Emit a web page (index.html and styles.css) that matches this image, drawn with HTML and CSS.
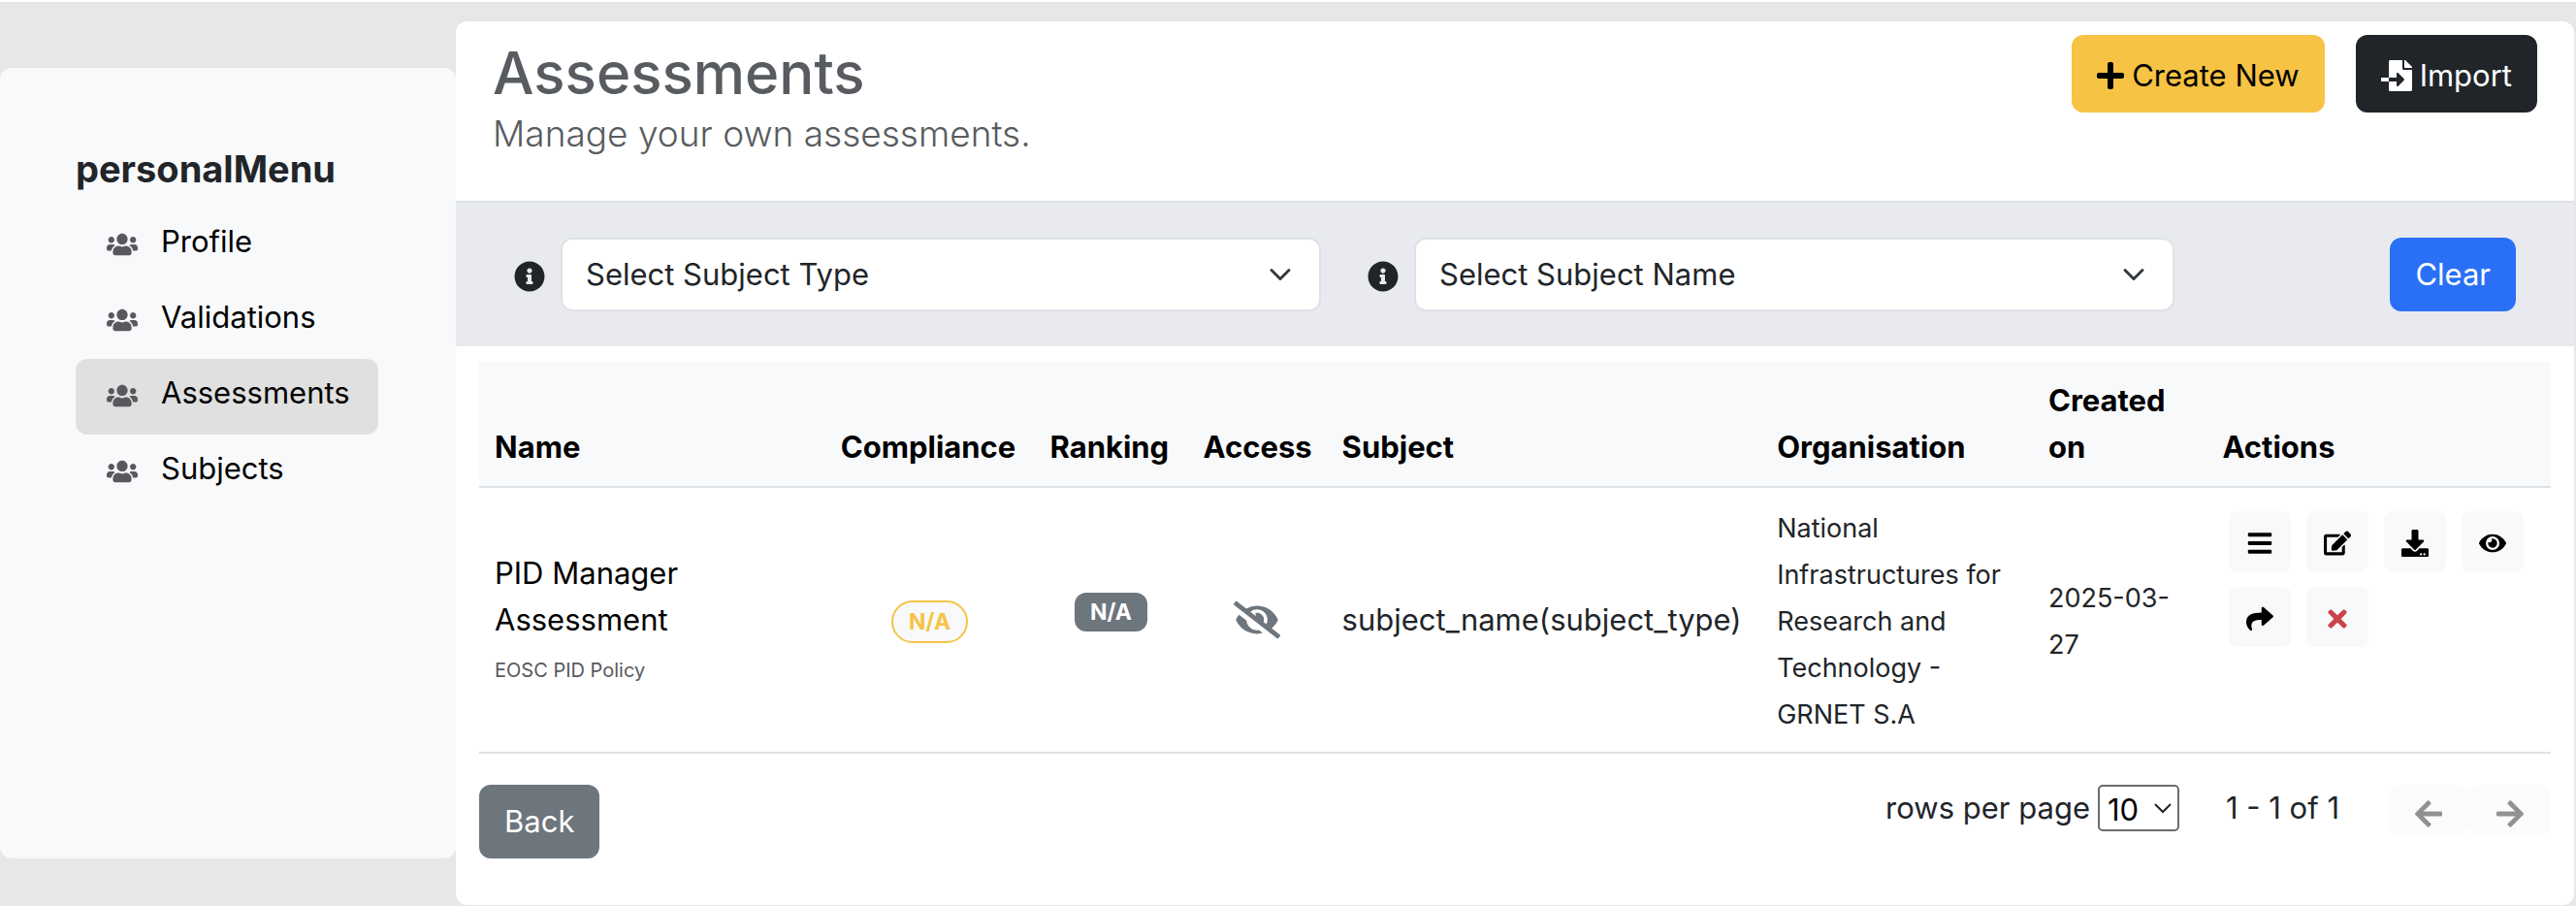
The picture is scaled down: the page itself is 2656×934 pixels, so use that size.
FILE: index.html
```html
<!DOCTYPE html>
<html lang="en">
<head>
<meta charset="utf-8">
<title>Assessments</title>
<link rel="stylesheet" href="styles.css">
</head>
<body>
<svg class="sprite" aria-hidden="true">
  <symbol id="users" viewBox="0 0 640 512"><path d="M96 224c35.3 0 64-28.7 64-64s-28.7-64-64-64-64 28.7-64 64 28.7 64 64 64zm448 0c35.3 0 64-28.7 64-64s-28.7-64-64-64-64 28.7-64 64 28.7 64 64 64zm32 32h-64c-17.6 0-33.5 7.1-45.1 18.6 40.3 22.1 68.9 62 75.1 109.4h66c17.7 0 32-14.3 32-32v-32c0-35.3-28.7-64-64-64zm-256 0c61.9 0 112-50.1 112-112S381.9 32 320 32 208 82.1 208 144s50.1 112 112 112zm76.8 32h-8.3c-20.8 10-43.9 16-68.5 16s-47.6-6-68.5-16h-8.3C179.6 288 128 339.6 128 403.2V432c0 26.5 21.5 48 48 48h288c26.5 0 48-21.5 48-48v-28.8c0-63.6-51.6-115.2-115.2-115.2zm-223.7-13.4C161.5 263.1 145.6 256 128 256H64c-35.3 0-64 28.7-64 64v32c0 17.7 14.3 32 32 32h65.9c6.3-47.4 34.9-87.3 75.2-109.4z"/></symbol>
  <symbol id="plus" viewBox="0 0 448 512"><path d="M416 208H272V64c0-17.67-14.33-32-32-32h-32c-17.67 0-32 14.33-32 32v144H32c-17.67 0-32 14.33-32 32v32c0 17.67 14.33 32 32 32h144v144c0 17.67 14.33 32 32 32h32c17.67 0 32-14.33 32-32V304h144c17.67 0 32-14.33 32-32v-32c0-17.67-14.33-32-32-32z"/></symbol>
  <symbol id="file-import" viewBox="0 0 512 512"><path d="M16 288c-8.8 0-16 7.2-16 16v32c0 8.8 7.2 16 16 16h112v-64zm489-183L407.1 7c-4.5-4.5-10.6-7-17-7H384v128h128v-6.1c0-6.3-2.5-12.4-7-16.9zm-153 31V0H152c-13.3 0-24 10.7-24 24v264h128v-65.2c0-14.3 17.3-21.4 27.4-11.3L379 308c6.6 6.7 6.6 17.4 0 24l-95.7 96.4c-10.1 10.1-27.4 3-27.4-11.3V352H128v136c0 13.3 10.7 24 24 24h336c13.3 0 24-10.7 24-24V160H376c-13.2 0-24-10.8-24-24z"/></symbol>
  <symbol id="info" viewBox="0 0 512 512"><path d="M256 8C119.043 8 8 119.083 8 256c0 136.997 111.043 248 248 248s248-111.003 248-248C504 119.083 392.957 8 256 8zm0 110c23.196 0 42 18.804 42 42s-18.804 42-42 42-42-18.804-42-42 18.804-42 42-42zm56 254c0 6.627-5.373 12-12 12h-88c-6.627 0-12-5.373-12-12v-24c0-6.627 5.373-12 12-12h12v-64h-12c-6.627 0-12-5.373-12-12v-24c0-6.627 5.373-12 12-12h64c6.627 0 12 5.373 12 12v100h12c6.627 0 12 5.373 12 12v24z"/></symbol>
  <symbol id="chevron" viewBox="0 0 16 16"><path fill="none" stroke="currentColor" stroke-width="2" stroke-linecap="round" stroke-linejoin="round" d="m2 5 6 6 6-6"/></symbol>
  <symbol id="chevron-thin" viewBox="0 0 20 20"><path fill="none" stroke="currentColor" stroke-width="2" d="m2 6 8 8 8-8"/></symbol>
  <symbol id="bars" viewBox="0 0 448 512"><path d="M16 132h416c8.837 0 16-7.163 16-16V76c0-8.837-7.163-16-16-16H16C7.163 60 0 67.163 0 76v40c0 8.837 7.163 16 16 16zm0 160h416c8.837 0 16-7.163 16-16v-40c0-8.837-7.163-16-16-16H16c-8.837 0-16 7.163-16 16v40c0 8.837 7.163 16 16 16zm0 160h416c8.837 0 16-7.163 16-16v-40c0-8.837-7.163-16-16-16H16c-8.837 0-16 7.163-16 16v40c0 8.837 7.163 16 16 16z"/></symbol>
  <symbol id="edit" viewBox="0 0 576 512"><path d="M402.6 83.2l90.2 90.2c3.8 3.8 3.8 10 0 13.8L274.4 405.6l-92.8 10.3c-12.4 1.4-22.9-9.1-21.5-21.5l10.3-92.8L388.8 83.2c3.8-3.8 10-3.8 13.8 0zm162-22.9l-48.8-48.8c-15.2-15.2-39.9-15.2-55.2 0l-35.4 35.4c-3.8 3.8-3.8 10 0 13.8l90.2 90.2c3.8 3.8 10 3.8 13.8 0l35.4-35.4c15.2-15.3 15.2-40 0-55.2zM384 346.2V448H64V128h229.8c3.2 0 6.2-1.3 8.5-3.5l40-40c7.6-7.6 2.2-20.5-8.5-20.5H48C21.5 64 0 85.5 0 112v352c0 26.5 21.5 48 48 48h352c26.5 0 48-21.5 48-48V306.2c0-10.7-12.9-16-20.5-8.5l-40 40c-2.2 2.3-3.5 5.3-3.5 8.5z"/></symbol>
  <symbol id="download" viewBox="0 0 512 512"><path d="M216 0h80c13.3 0 24 10.7 24 24v168h87.7c17.8 0 26.7 21.5 14.1 34.1L269.7 378.3c-7.5 7.5-19.8 7.5-27.3 0L90.1 226.1c-12.6-12.6-3.7-34.1 14.1-34.1H192V24c0-13.3 10.7-24 24-24zm296 376v112c0 13.3-10.7 24-24 24H24c-13.3 0-24-10.7-24-24V376c0-13.3 10.7-24 24-24h146.7l49 49c20.1 20.1 52.5 20.1 72.6 0l49-49H488c13.3 0 24 10.7 24 24zm-124 88c0-11-9-20-20-20s-20 9-20 20 9 20 20 20 20-9 20-20zm64 0c0-11-9-20-20-20s-20 9-20 20 9 20 20 20 20-9 20-20z"/></symbol>
  <symbol id="eye" viewBox="0 0 576 512"><path d="M572.52 241.4C518.29 135.59 410.93 64 288 64S57.68 135.64 3.48 241.41a32.35 32.35 0 0 0 0 29.19C57.71 376.41 165.07 448 288 448s230.32-71.64 284.52-177.41a32.35 32.35 0 0 0 0-29.19zM288 400a144 144 0 1 1 144-144 143.93 143.93 0 0 1-144 144zm0-240a95.31 95.31 0 0 0-25.31 3.79 47.85 47.85 0 0 1-66.9 66.9A95.78 95.78 0 1 0 288 160z"/></symbol>
  <symbol id="eye-slash" viewBox="0 0 640 512"><path d="M320 400c-75.85 0-137.25-58.71-142.9-133.11L72.2 185.82c-13.79 17.3-26.48 35.59-36.72 55.59a32.35 32.35 0 0 0 0 29.19C89.71 376.41 197.07 448 320 448c26.91 0 52.87-4 77.89-10.46L346 397.39a144.13 144.13 0 0 1-26 2.61zm313.82 58.1l-110.55-85.44a331.25 331.25 0 0 0 81.25-102.07 32.35 32.35 0 0 0 0-29.19C550.29 135.59 442.93 64 320 64a308.15 308.15 0 0 0-147.32 37.7L45.46 3.37A16 16 0 0 0 23 6.18L3.37 31.45A16 16 0 0 0 6.18 53.9l588.36 454.73a16 16 0 0 0 22.46-2.81l19.64-25.27a16 16 0 0 0-2.82-22.45zm-183.72-142l-39.3-30.38A94.75 94.75 0 0 0 416 256a94.76 94.76 0 0 0-121.31-92.21A47.65 47.65 0 0 1 304 192a46.64 46.64 0 0 1-1.54 10l-73.61-56.89A142.31 142.31 0 0 1 320 112a143.92 143.92 0 0 1 144 144c0 21.63-5.29 41.79-13.9 60.11z"/></symbol>
  <symbol id="share" viewBox="0 0 512 512"><path d="M503.691 189.836L327.687 37.851C312.281 24.546 288 35.347 288 56.015v80.053C127.371 137.907 0 170.1 0 322.326c0 61.441 39.581 122.309 83.333 154.132 13.653 9.931 33.111-2.533 28.077-18.631C66.066 312.814 132.917 274.316 288 272.085V360c0 20.7 24.3 31.453 39.687 18.164l176.004-152c11.071-9.562 11.086-26.753 0-36.328z"/></symbol>
  <symbol id="times" viewBox="0 0 352 512"><path d="M242.72 256l100.07-100.07c12.28-12.28 12.28-32.19 0-44.48l-22.24-22.24c-12.28-12.28-32.19-12.28-44.48 0L176 189.28 75.93 89.21c-12.28-12.28-32.19-12.28-44.48 0L9.21 111.45c-12.28 12.28-12.28 32.19 0 44.48L109.28 256 9.21 356.07c-12.28 12.28-12.28 32.19 0 44.48l22.24 22.24c12.28 12.28 32.2 12.28 44.48 0L176 322.72l100.07 100.07c12.28 12.28 32.2 12.28 44.48 0l22.24-22.24c12.28-12.28 12.28-32.19 0-44.48L242.72 256z"/></symbol>
  <symbol id="arrow-left" viewBox="0 0 448 512"><path d="M257.5 445.1l-22.2 22.2c-9.4 9.4-24.6 9.4-33.9 0L7 273c-9.4-9.4-9.4-24.6 0-33.9L201.4 44.7c9.4-9.4 24.6-9.4 33.9 0l22.2 22.2c9.5 9.5 9.3 25-.4 34.3L136.6 216H424c13.3 0 24 10.7 24 24v32c0 13.3-10.7 24-24 24H136.6l120.5 114.8c9.8 9.3 10 24.8.4 34.3z"/></symbol>
  <symbol id="arrow-right" viewBox="0 0 448 512"><path d="M190.5 66.9l22.2-22.2c9.4-9.4 24.6-9.4 33.9 0L441 239c9.4 9.4 9.4 24.6 0 33.9L246.6 467.3c-9.4 9.4-24.6 9.4-33.9 0l-22.2-22.2c-9.5-9.5-9.3-25 .4-34.3L311.4 296H24c-13.3 0-24-10.7-24-24v-32c0-13.3 10.7-24 24-24h287.4L190.9 101.2c-9.8-9.3-10-24.8-.4-34.3z"/></symbol>
</svg>

<div class="page">
  <nav class="sidebar" aria-labelledby="menu-title">
    <h2 class="sidebar-title" id="menu-title">personalMenu</h2>
    <ul class="menu">
      <li><a class="menu-link" href="#profile"><svg class="icon menu-icon"><use href="#users"/></svg>Profile</a></li>
      <li><a class="menu-link" href="#validations"><svg class="icon menu-icon"><use href="#users"/></svg>Validations</a></li>
      <li><a class="menu-link active" href="#assessments" aria-current="page"><svg class="icon menu-icon"><use href="#users"/></svg>Assessments</a></li>
      <li><a class="menu-link" href="#subjects"><svg class="icon menu-icon"><use href="#users"/></svg>Subjects</a></li>
    </ul>
  </nav>

  <main class="main">
    <header class="header">
      <div>
        <h1 class="title">Assessments</h1>
        <p class="subtitle">Manage your own assessments.</p>
      </div>
      <div class="header-actions">
        <button class="btn btn-tall btn-warning" type="button"><svg class="icon icon-plus"><use href="#plus"/></svg>Create New</button>
        <button class="btn btn-tall btn-dark" type="button"><svg class="icon icon-32"><use href="#file-import"/></svg>Import</button>
      </div>
    </header>

    <form class="filters">
      <div class="filter">
        <svg class="icon icon-32 info-icon"><use href="#info"/></svg>
        <div class="select-wrap">
          <select class="select" aria-label="Subject type"><option>Select Subject Type</option></select>
          <svg class="icon select-arrow"><use href="#chevron"/></svg>
        </div>
      </div>
      <div class="filter">
        <svg class="icon icon-32 info-icon"><use href="#info"/></svg>
        <div class="select-wrap">
          <select class="select" aria-label="Subject name"><option>Select Subject Name</option></select>
          <svg class="icon select-arrow"><use href="#chevron"/></svg>
        </div>
      </div>
      <button class="btn btn-primary" type="reset">Clear</button>
    </form>

    <div class="content">
      <table class="table">
        <colgroup>
          <col class="col-name"><col class="col-compliance"><col class="col-ranking"><col class="col-access"><col class="col-subject"><col class="col-org"><col class="col-created"><col class="col-actions">
        </colgroup>
        <thead>
          <tr><th>Name</th><th>Compliance</th><th>Ranking</th><th>Access</th><th>Subject</th><th>Organisation</th><th>Created on</th><th>Actions</th></tr>
        </thead>
        <tbody>
          <tr>
            <td><div class="name">PID Manager Assessment</div><div><span class="policy">EOSC PID Policy</span></div></td>
            <td class="center"><span class="badge badge-outline">N/A</span></td>
            <td class="center"><span class="badge badge-solid">N/A</span></td>
            <td class="center"><svg class="icon access-icon" role="img" aria-label="Private"><use href="#eye-slash"/></svg></td>
            <td>subject_name(subject_type)</td>
            <td><span class="small">National Infrastructures for Research and Technology - GRNET S.A</span></td>
            <td><span class="small">2025-03-27</span></td>
            <td>
              <div class="actions">
                <button class="action" type="button" aria-label="Details"><svg class="icon icon-28"><use href="#bars"/></svg></button>
                <button class="action" type="button" aria-label="Edit"><svg class="icon icon-28"><use href="#edit"/></svg></button>
                <button class="action" type="button" aria-label="Download"><svg class="icon icon-28"><use href="#download"/></svg></button>
                <button class="action" type="button" aria-label="View"><svg class="icon icon-28"><use href="#eye"/></svg></button>
                <button class="action" type="button" aria-label="Share"><svg class="icon icon-28"><use href="#share"/></svg></button>
                <button class="action action-danger" type="button" aria-label="Delete"><svg class="icon icon-28"><use href="#times"/></svg></button>
              </div>
            </td>
          </tr>
        </tbody>
      </table>

      <footer class="footer">
        <button class="btn btn-secondary" type="button">Back</button>
        <div class="pager">
          <div class="rows">
            <label for="rows">rows per page</label>
            <div class="select-wrap">
              <select class="rows-select" id="rows"><option>10</option></select>
              <svg class="icon rows-arrow"><use href="#chevron-thin"/></svg>
            </div>
          </div>
          <span class="range">1 - 1 of 1</span>
          <div class="pager-buttons">
            <button class="page-btn" type="button" aria-label="Previous page" disabled><svg class="icon icon-32"><use href="#arrow-left"/></svg></button>
            <button class="page-btn" type="button" aria-label="Next page" disabled><svg class="icon icon-32"><use href="#arrow-right"/></svg></button>
          </div>
        </div>
      </footer>
    </div>
  </main>
</div>
</body>
</html>
```

FILE: styles.css
```css
*,
*::before,
*::after {
  box-sizing: border-box;
}

body {
  margin: 0;
  min-height: 100vh;
  border-top: 2px solid #fff;
  background: #e7e7e7;
  color: #212529;
  font-family: Inter, "Liberation Sans", sans-serif;
  font-size: 31px;
  line-height: 48px;
}

h1,
h2,
p,
ul {
  margin: 0;
  padding: 0;
}

button,
select {
  font: inherit;
  margin: 0;
}

.sprite {
  display: none;
}

.icon {
  display: block;
  flex: none;
  fill: currentColor;
}

.icon-28 {
  width: 28px;
  height: 28px;
}

.icon-32 {
  width: 32px;
  height: 32px;
}

.icon-plus {
  width: 28px;
  height: 32px;
}

.page {
  display: grid;
  grid-template-columns: 470px 1fr;
  align-items: start;
  padding: 20px 2px 0 0;
}

/* Sidebar */
.sidebar {
  align-self: stretch;
  margin: 48px 0;
  padding: 80px 80px 80px 78px;
  border-radius: 12px;
  background: #f8f9fb;
}

.sidebar-title {
  margin-bottom: 16px;
  font-size: 38px;
  line-height: 48px;
  font-weight: 700;
}

.menu {
  list-style: none;
}

.menu-link {
  display: flex;
  align-items: center;
  gap: 24px;
  height: 78px;
  padding: 0 32px 8px;
  border-radius: 12px;
  color: #000;
  text-decoration: none;
}

.menu-link.active {
  background: #e0e0e0;
}

.menu-icon {
  width: 32px;
  height: 26px;
  margin-top: 6px;
  color: #58595d;
}

/* Main panel */
.main {
  border-radius: 12px;
  background: #fff;
}

.header {
  display: flex;
  justify-content: space-between;
  align-items: flex-start;
  padding: 14px 38px 45px;
}

.title {
  color: #585c60;
  font-size: 60px;
  line-height: 78px;
  font-weight: 500;
}

.subtitle {
  color: #585c60;
  font-size: 37px;
  line-height: 48px;
  font-weight: 300;
}

.header-actions {
  display: flex;
  gap: 32px;
}

.btn {
  display: flex;
  align-items: center;
  gap: 8px;
  padding: 14px 26px;
  border: 0;
  border-radius: 12px;
  color: #fff;
  white-space: nowrap;
}

.btn-tall {
  padding: 18px 26px 14px;
}

.btn-warning {
  background: #f6c344;
  color: #000;
}

.btn-dark {
  background: #212529;
}

.btn-primary {
  background: #2970f6;
}

.btn-secondary {
  background: #6d757d;
}

.filters {
  display: flex;
  align-items: center;
  gap: 48px;
  padding: 36px 60px;
  border-top: 2px solid #dee2e6;
  background: #e9eaef;
}

.filter {
  display: flex;
  flex: 0 1 832px;
  align-items: center;
  gap: 16px;
}

.info-icon {
  margin-top: 4px;
}

.filters .btn {
  margin-left: auto;
}

.select-wrap {
  position: relative;
  flex: 1;
}

.select {
  display: block;
  width: 100%;
  height: 76px;
  padding: 0 72px 0 24px;
  border: 2px solid #dee2e6;
  border-radius: 12px;
  background: #fff;
  color: #212529;
  appearance: none;
}

.select-arrow {
  position: absolute;
  top: 26px;
  right: 30px;
  width: 24px;
  height: 24px;
  color: #343a40;
  pointer-events: none;
}

/* Table */
.content {
  padding: 16px 24px 48px;
}

.table {
  width: 100%;
  border-collapse: separate;
  border-spacing: 0;
  table-layout: fixed;
}

.col-name { width: 16.7%; }
.col-compliance { width: 10.1%; }
.col-ranking { width: 7.4%; }
.col-access { width: 6.7%; }
.col-subject { width: 21%; }
.col-org { width: 13.1%; }
.col-created { width: 8.4%; }
.col-actions { width: 16.6%; }

.table th,
.table td {
  padding: 16px;
  border-bottom: 2px solid #dee2e6;
  text-align: left;
  vertical-align: middle;
}

.table th {
  background: #f8f9fb;
  color: #000;
  font-weight: 700;
  vertical-align: bottom;
}

.table .center {
  text-align: center;
}

.small {
  font-size: 27px;
  line-height: 32px;
}

.name {
  max-width: 240px;
  color: #000;
}

.policy {
  color: #58595d;
  font-size: 20px;
  line-height: 24px;
}

.badge {
  display: inline-block;
  font-size: 23px;
  line-height: 24px;
  font-weight: 700;
  vertical-align: middle;
}

.badge-outline {
  padding: 8px 16px;
  border: 2px solid #f6c344;
  border-radius: 22px;
  background: #f8f9fb;
  color: #f6c344;
}

.badge-solid {
  margin-bottom: 16px;
  padding: 8px 16px;
  border-radius: 12px;
  background: #6d757d;
  color: #fff;
}

.access-icon {
  width: 48px;
  height: 40px;
  margin: 0 auto;
  color: #6d757d;
}

.actions {
  display: flex;
  flex-wrap: wrap;
  gap: 16px;
  padding: 0 7px;
  margin-bottom: 84px;
}

.action {
  display: flex;
  align-items: center;
  justify-content: center;
  width: 64px;
  height: 62px;
  padding: 4px 0 0;
  border: 0;
  border-radius: 8px;
  background: #f8f9fb;
  color: #000;
}

.action-danger {
  color: #cb444a;
}

/* Footer */
.footer {
  display: flex;
  justify-content: space-between;
  align-items: flex-start;
  padding-top: 32px;
}

.pager,
.rows,
.pager-buttons {
  display: flex;
}

.rows {
  gap: 8px;
}

.rows-select {
  display: block;
  width: 84px;
  height: 48px;
  padding: 0 8px;
  border: 2px solid #6b6b6b;
  border-radius: 5px;
  background: #fff;
  color: #000;
  appearance: none;
}

.rows-arrow {
  position: absolute;
  top: 14px;
  right: 7px;
  width: 20px;
  height: 20px;
  pointer-events: none;
}

.range {
  margin: 0 50px 0 48px;
}

.page-btn {
  display: flex;
  align-items: center;
  justify-content: center;
  width: 84px;
  height: 52px;
  padding: 8px 0 0;
  border: 0;
  border-radius: 12px;
  background: #fafbfd;
  color: #909193;
}
```
